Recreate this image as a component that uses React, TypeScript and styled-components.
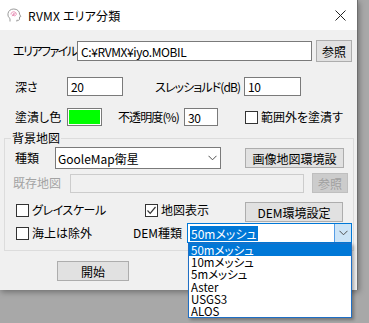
import React from "react";
import styled, { createGlobalStyle } from "styled-components";

const demOptions = ["50mメッシュ", "10mメッシュ", "5mメッシュ", "Aster", "USGS3", "ALOS"];

function CheckMark() {
  return (
    <svg width="11" height="11" viewBox="0 0 11 11">
      <polyline points="1.5,5.5 4.2,8.3 9.5,2" fill="none" stroke="#333" strokeWidth="1.2" />
    </svg>
  );
}

function Chevron() {
  return (
    <svg width="9" height="6" viewBox="0 0 9 6">
      <polyline points="0.5,0.8 4.5,4.8 8.5,0.8" fill="none" stroke="#505050" strokeWidth="1" />
    </svg>
  );
}

function AppIcon() {
  return (
    <svg width="15" height="15" viewBox="0 0 15 15">
      <path
        d="M3 13.5 V10.5 C1.2 9.3 0.8 7.5 1 5.6 C1.4 2.6 3.8 1 6.8 1 C10.2 1 12.6 3.3 12.6 6.2 L13.8 8.6 L12.5 9 L12.5 11.2 C12.5 12 11.9 12.4 11 12.3 L9.8 12.2 V13.5"
        fill="none"
        stroke="#8f8f8f"
        strokeWidth="0.9"
      />
      <path
        d="M4 6.5 C4 4.2 6 3.4 7.5 3.9 C9.6 4.5 9.9 6.8 8.4 7.6 C7 8.3 5.6 7.2 6.6 6 M5 8.2 L7.2 4.8 M8.5 4.8 L6 8"
        fill="none"
        stroke="#e88fb4"
        strokeWidth="0.9"
      />
    </svg>
  );
}

function CloseIcon() {
  return (
    <svg width="11" height="11" viewBox="0 0 11 11">
      <path d="M0.5 0.5 L10.5 10.5 M10.5 0.5 L0.5 10.5" stroke="#222" strokeWidth="1" />
    </svg>
  );
}

export default function App() {
  return (
    <>
      <GlobalStyle />
      <Window>
        <TitleBar>
          <AppIcon />
          <Title>RVMX エリア分類</Title>
          <CloseBox>
            <CloseIcon />
          </CloseBox>
        </TitleBar>

        <Row $mt={10} $h={22} $pl={13}>
          <Label $w={64} $ls={-1.5}>エリアファイル</Label>
          <TextBox $w={235} $h={20}>C:¥RVMX¥iyo.MOBIL</TextBox>
          <Button $w={36} $h={22} $ml={4}>参照</Button>
        </Row>

        <Row $mt={15} $h={19} $pl={15}>
          <Label $w={52}>深さ</Label>
          <TextBox $w={56} $h={19}>20</TextBox>
          <Label $w={89} $ml={32} $ls={-0.9}>スレッショルド(dB)</Label>
          <TextBox $w={57} $h={19}>10</TextBox>
        </Row>

        <Row $mt={11} $h={20} $pl={15}>
          <Label $w={52}>塗潰し色</Label>
          <ColorSwatch $color="#00ff00" />
          <Label $w={66} $ml={16} $ls={-0.9}>不透明度(%)</Label>
          <TextBox $w={34} $h={18}>30</TextBox>
          <CheckItem $ml={27}>
            <CheckBox />
            <Label>範囲外を塗潰す</Label>
          </CheckItem>
        </Row>

        <Group>
          <Legend>背景地図</Legend>

          <Row $mt={2} $h={22} $pl={10}>
            <Label $w={40}>種類</Label>
            <Combo $w={166} $h={22}>
              <ComboText>GooleMap衛星</ComboText>
              <ComboArrow>
                <Chevron />
              </ComboArrow>
            </Combo>
            <Button $w={99} $h={20} $ml={24}>画像地図環境設</Button>
          </Row>

          <Row $mt={4} $h={20} $pl={8}>
            <Label $w={57} $disabled>既存地図</Label>
            <TextBox $w={234} $h={19} $disabled />
            <Button $w={36} $h={20} $ml={8} $disabled>参照</Button>
          </Row>

          <Row $mt={9} $h={20} $pl={11}>
            <CheckItem $w={129} $dy={-2}>
              <CheckBox />
              <Label $ls={-0.4}>グレイスケール</Label>
            </CheckItem>
            <CheckItem $w={100} $dy={-2}>
              <CheckBox>
                <CheckMark />
              </CheckBox>
              <Label>地図表示</Label>
            </CheckItem>
            <Button $w={98} $h={20}>DEM環境設定</Button>
          </Row>

          <Row $mt={1} $h={20} $pl={11}>
            <CheckItem $w={117}>
              <CheckBox />
              <Label>海上は除外</Label>
            </CheckItem>
            <Label $w={54}>DEM種類</Label>
            <Combo $w={165} $h={20} $focused>
              <ComboText>
                <Selected>{demOptions[0]}</Selected>
              </ComboText>
              <ComboArrow $focused>
                <Chevron />
              </ComboArrow>
            </Combo>
          </Row>
        </Group>

        <Row $mt={10} $h={20} $pl={57}>
          <Button $w={72} $h={20}>開始</Button>
        </Row>

        <DropList>
          {demOptions.map((opt, i) => (
            <DropItem key={opt} $active={i === 0}>
              {opt}
            </DropItem>
          ))}
        </DropList>
      </Window>
    </>
  );
}

const GlobalStyle = createGlobalStyle`
  html, body {
    margin: 0;
    padding: 0;
    background: #a8a8a8;
  }
  body {
    width: 369px;
    height: 323px;
    overflow: hidden;
    font-family: "Noto Sans CJK JP", "Noto Sans", sans-serif;
    font-size: 12px;
    color: #000;
  }
`;

const Window = styled.div`
  position: relative;
  display: flex;
  flex-direction: column;
  width: 358px;
  height: 290px;
  box-sizing: border-box;
  background: #f0f0f0;
  border-right: 1px solid #6e6e6e;
  box-shadow: 1px 2px 6px rgba(0, 0, 0, 0.35);
`;

const TitleBar = styled.div`
  display: flex;
  align-items: center;
  height: 30px;
  flex-shrink: 0;
  padding-left: 7px;
  background: #ffffff;
`;

const Title = styled.span`
  margin-left: 6px;
  font-size: 12px;
  letter-spacing: 0.2px;
  font-feature-settings: "palt";
`;

const CloseBox = styled.div`
  margin-left: auto;
  width: 30px;
  height: 30px;
  display: flex;
  align-items: center;
  justify-content: center;
  margin-right: 2px;
`;

const Row = styled.div<{ $mt: number; $h: number; $pl: number }>`
  display: flex;
  align-items: center;
  flex-shrink: 0;
  margin-top: ${(p) => p.$mt}px;
  height: ${(p) => p.$h}px;
  padding-left: ${(p) => p.$pl}px;
`;

const Label = styled.span<{ $w?: number; $ml?: number; $ls?: number; $disabled?: boolean }>`
  flex-shrink: 0;
  white-space: nowrap;
  width: ${(p) => (p.$w ? `${p.$w}px` : "auto")};
  margin-left: ${(p) => p.$ml ?? 0}px;
  letter-spacing: ${(p) => p.$ls ?? 0}px;
  color: ${(p) => (p.$disabled ? "#a3a3a3" : "#000")};
  font-size: 12px;
  line-height: 14px;
  font-feature-settings: "palt";
`;

const TextBox = styled.div<{ $w: number; $h: number; $disabled?: boolean }>`
  flex-shrink: 0;
  display: flex;
  align-items: center;
  box-sizing: border-box;
  width: ${(p) => p.$w}px;
  height: ${(p) => p.$h}px;
  padding-left: 3px;
  background: ${(p) => (p.$disabled ? "#f0f0f0" : "#ffffff")};
  border: 1px solid ${(p) => (p.$disabled ? "#cccccc" : "#7a7a7a")};
  font-size: 12px;
  letter-spacing: -0.4px;
  white-space: nowrap;
`;

const Button = styled.button<{ $w: number; $h: number; $ml?: number; $disabled?: boolean }>`
  flex-shrink: 0;
  display: flex;
  align-items: center;
  justify-content: center;
  box-sizing: border-box;
  width: ${(p) => p.$w}px;
  height: ${(p) => p.$h}px;
  margin: 0 0 0 ${(p) => p.$ml ?? 0}px;
  padding: 0;
  font: inherit;
  font-size: 12px;
  font-feature-settings: "palt";
  white-space: nowrap;
  color: ${(p) => (p.$disabled ? "#a0a0a0" : "#000")};
  background: ${(p) => (p.$disabled ? "#cccccc" : "#e1e1e1")};
  border: 1px solid ${(p) => (p.$disabled ? "#bfbfbf" : "#adadad")};
`;

const ColorSwatch = styled.div<{ $color: string }>`
  flex-shrink: 0;
  box-sizing: border-box;
  width: 35px;
  height: 18px;
  background: ${(p) => p.$color};
  border: 1px solid #7a7a7a;
  box-shadow: inset 0 0 0 1px #ffffff;
`;

const CheckItem = styled.div<{ $w?: number; $ml?: number; $dy?: number }>`
  flex-shrink: 0;
  display: flex;
  align-items: center;
  gap: 3px;
  width: ${(p) => (p.$w ? `${p.$w}px` : "auto")};
  margin-left: ${(p) => p.$ml ?? 0}px;
  transform: translateY(${(p) => p.$dy ?? 0}px);
`;

const CheckBox = styled.span`
  flex-shrink: 0;
  display: flex;
  align-items: center;
  justify-content: center;
  box-sizing: border-box;
  width: 13px;
  height: 13px;
  background: #ffffff;
  border: 1px solid #333333;
`;

const Combo = styled.div<{ $w: number; $h: number; $focused?: boolean }>`
  flex-shrink: 0;
  display: flex;
  align-items: stretch;
  box-sizing: border-box;
  width: ${(p) => p.$w}px;
  height: ${(p) => p.$h}px;
  background: #ffffff;
  border: 1px solid ${(p) => (p.$focused ? "#0078d7" : "#7a7a7a")};
`;

const ComboText = styled.div`
  flex: 1;
  display: flex;
  align-items: center;
  padding-left: 2px;
  white-space: nowrap;
  font-size: 12px;
  font-feature-settings: "palt";
`;

const Selected = styled.span`
  background: #0078d7;
  color: #ffffff;
  padding: 0 1px;
  line-height: 15px;
`;

const ComboArrow = styled.div<{ $focused?: boolean }>`
  width: 16px;
  display: flex;
  align-items: center;
  justify-content: center;
  background: ${(p) => (p.$focused ? "#cce4f7" : "transparent")};
  border-left: 1px solid ${(p) => (p.$focused ? "#569de5" : "transparent")};
`;

const Group = styled.fieldset`
  flex-shrink: 0;
  box-sizing: border-box;
  width: 350px;
  min-width: 0;
  margin: 4px 0 0 4px;
  padding: 0 0 7px 0;
  border: 1px solid #dcdcdc;
`;

const Legend = styled.legend`
  margin-left: 6px;
  padding: 0 1px;
  font-size: 12px;
  line-height: 14px;
  font-feature-settings: "palt";
`;

const DropList = styled.div`
  position: absolute;
  left: 188px;
  top: 243px;
  width: 164px;
  box-sizing: border-box;
  background: #ffffff;
  border: 1px solid #1f6fc5;
  box-shadow: 2px 2px 3px rgba(0, 0, 0, 0.3);
`;

const DropItem = styled.div<{ $active?: boolean }>`
  height: 12.2px;
  line-height: 12px;
  padding-left: 2px;
  font-size: 11.5px;
  font-feature-settings: "palt";
  white-space: nowrap;
  background: ${(p) => (p.$active ? "#0078d7" : "transparent")};
  color: ${(p) => (p.$active ? "#ffffff" : "#000")};
`;
